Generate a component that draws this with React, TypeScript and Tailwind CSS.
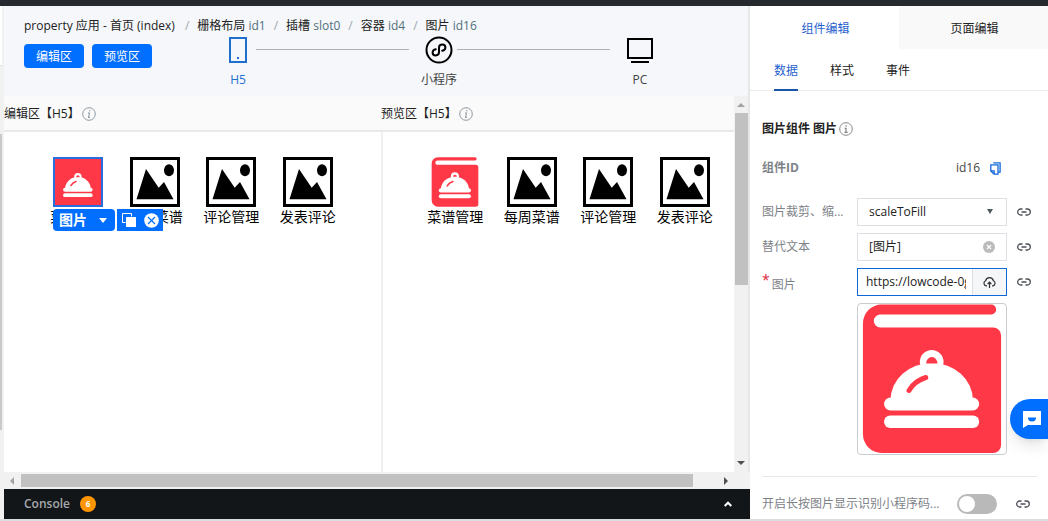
import { Fragment, useState } from "react";
import type { ReactNode } from "react";
import clsx from "clsx";

const CRUMBS = [
  { name: "栅格布局", id: "id1" },
  { name: "插槽", id: "slot0" },
  { name: "容器", id: "id4" },
  { name: "图片", id: "id16" },
];

const MENU = ["菜谱管理", "每周菜谱", "评论管理", "发表评论"];

function BookIcon({ className }: { className?: string }) {
  return (
    <svg viewBox="0 0 150 150" preserveAspectRatio="none" className={className} aria-hidden="true">
      <path
        fill="#ff3847"
        d="M24 .5H135a5 5 0 0 1 0 10H22.500a6.500 6.500 0 0 0 0 13H137a8 8 0 0 1 8 8V141a8 8 0 0 1-8 8H24a19 19 0 0 1-19-19V19.500a19 19 0 0 1 19-19z"
      />
      <circle cx="74.700" cy="58" r="12" fill="#fff" />
      <path fill="#fff" d="M33 96a41.700 37 0 0 1 83.400 0z" />
      <path fill="#ff3847" d="M69 59.500a5.800 6.500 0 0 1 11.600 0z" />
      <rect x="26.400" y="93.500" width="96.400" height="13" rx="6.500" fill="#fff" />
      <rect x="26.400" y="111.500" width="96.400" height="12.500" rx="6.200" fill="#fff" />
      <path d="M51.700 86.500q5.500-9.500 17-13" fill="none" stroke="#ff3847" strokeWidth="5" strokeLinecap="round" />
    </svg>
  );
}

function PictureIcon({ className }: { className?: string }) {
  return (
    <svg viewBox="0 0 50 50" className={className} aria-hidden="true">
      <rect x="1.500" y="1.500" width="47" height="47" fill="#fff" stroke="#000" strokeWidth="3" />
      <path d="M6.500 42.300 16 12l12.700 18.700L34 25l9.500 17.300z" />
      <ellipse cx="39" cy="13.300" rx="5" ry="6" />
    </svg>
  );
}

function PhoneIcon() {
  return (
    <svg width="18" height="26" viewBox="0 0 18 26" aria-hidden="true">
      <rect x="1" y="1" width="16" height="24" fill="none" stroke="#1f6fd0" strokeWidth="2" />
      <rect x="8" y="20" width="2" height="2" fill="#1f6fd0" />
    </svg>
  );
}

function MiniProgramIcon() {
  return (
    <svg width="28" height="28" viewBox="0 0 28 28" fill="none" stroke="#000" strokeWidth="2" aria-hidden="true">
      <circle cx="14" cy="14" r="12.500" />
      <path
        strokeLinecap="round"
        d="M17.200 14.800c2.100-.5 3.200-1.800 3.200-3.300 0-1.700-1.400-2.900-3.100-2.900-1.900 0-3.300 1.300-3.300 3.100v4.600c0 1.800-1.400 3.100-3.300 3.100-1.700 0-3.100-1.200-3.100-2.900 0-1.500 1.100-2.800 3.200-3.300"
      />
    </svg>
  );
}

function MonitorIcon() {
  return (
    <svg width="26" height="26" viewBox="0 0 26 26" aria-hidden="true">
      <rect x="1" y="2" width="24" height="19" fill="none" stroke="#000" strokeWidth="2" />
      <path d="M4 24h18v2H4z" />
    </svg>
  );
}

function InfoIcon({ className, italic }: { className: string; italic?: boolean }) {
  return (
    <svg viewBox="0 0 14 14" fill="none" stroke="currentColor" className={className} aria-hidden="true">
      <circle cx="7" cy="7" r="6.300" />
      {italic ? (
        <path d="M7.900 3.200l-.2 1.200M6 6h1.400l-.8 4.400h1.300" strokeWidth="1.100" />
      ) : (
        <path d="M7 3.200v1.500M5.700 6.300H7v4M5.400 10.300h3.300" strokeWidth="1.300" />
      )}
    </svg>
  );
}

function LinkIcon() {
  return (
    <svg width="14" height="8" viewBox="0 0 14 8" fill="none" stroke="#4b4f55" strokeWidth="1.300" aria-hidden="true">
      <path d="M5.500 7H3.700a3 3 0 0 1 0-6h1.800M8.500 1h1.800a3 3 0 0 1 0 6H8.500M4.500 4h5" />
    </svg>
  );
}

function BindButton({ label }: { label: string }) {
  return (
    <button type="button" aria-label={label} className="flex h-7 w-4 shrink-0 items-center justify-center">
      <LinkIcon />
    </button>
  );
}

function Step({ icon, label, active }: { icon: ReactNode; label: string; active?: boolean }) {
  return (
    <div className="flex w-9 shrink-0 flex-col items-center">
      <span className="flex h-7 items-center">{icon}</span>
      <span className={clsx("mt-1.5 whitespace-nowrap leading-5", active ? "text-[#1f6fd0]" : "text-[#444]")}>{label}</span>
    </div>
  );
}

function PaneTitle({ children }: { children: ReactNode }) {
  return (
    <h2 className="flex h-9 shrink-0 items-center gap-0.5 border-b-2 border-[#e9e9e9] bg-[#fafafa] pt-0.5 text-[#222]">
      {children}
      <InfoIcon italic className="h-3.5 w-3.5 text-[#8f9aa3]" />
    </h2>
  );
}

function MenuGrid({ selected }: { selected?: boolean }) {
  return (
    <div className="relative grid grid-cols-4 text-sm leading-5 text-black">
      {MENU.map((label, i) => (
        <div key={label} className="flex flex-col items-center">
          {i === 0 ? (
            <span className={clsx("h-[50px] w-[50px]", selected && "border-2 border-[#2a6de0] bg-[#ff3847]")}>
              <BookIcon className="h-full w-full" />
            </span>
          ) : (
            <PictureIcon className="h-[50px] w-[50px]" />
          )}
          <span className="whitespace-nowrap">{label}</span>
        </div>
      ))}
      {selected && (
        <div className="absolute left-[13px] top-[52px] flex h-[22px] gap-0.5 text-white">
          <button type="button" className="flex w-[62px] items-center justify-between rounded-sm bg-[#006eff] pl-1.5 pr-2 font-bold">
            图片
            <svg width="8" height="5" viewBox="0 0 8 5" fill="currentColor" aria-hidden="true">
              <path d="M0 0h8L4 5z" />
            </svg>
          </button>
          <div className="flex w-[46px] items-center justify-between bg-[#006eff] px-1">
            <button type="button" aria-label="复制">
              <svg width="16" height="16" viewBox="0 0 16 16" aria-hidden="true">
                <path d="M4.500 10.500h-3v-9h9v3" fill="none" stroke="#fff" />
                <rect x="5" y="5" width="10" height="10" fill="#fff" />
              </svg>
            </button>
            <button type="button" aria-label="删除">
              <svg width="15" height="15" viewBox="0 0 15 15" aria-hidden="true">
                <circle cx="7.500" cy="7.500" r="7.300" fill="#fff" />
                <path d="M4 4l7 7M11 4l-7 7" stroke="#006eff" strokeWidth="1.200" />
              </svg>
            </button>
          </div>
        </div>
      )}
    </div>
  );
}

function VerticalScrollbar() {
  return (
    <div className="flex w-4 shrink-0 flex-col items-center border-r-2 border-[#e6e7e9] bg-[#f1f1f1]">
      <svg width="8" height="17" viewBox="0 0 8 17" aria-hidden="true">
        <path d="M0 11h8L4 7z" fill="#a3a3a3" />
      </svg>
      <div className="h-[172px] w-[13px] bg-[#c1c1c1]" />
      <div className="grow" />
      <svg width="8" height="17" viewBox="0 0 8 17" aria-hidden="true">
        <path d="M0 6h8l-4 4z" fill="#505050" />
      </svg>
    </div>
  );
}

function HorizontalScrollbar() {
  return (
    <div className="flex h-[17px] shrink-0 items-center bg-[#f1f1f1] pr-4">
      <svg width="17" height="8" viewBox="0 0 17 8" className="shrink-0" aria-hidden="true">
        <path d="M10 0v8L6 4z" fill="#a3a3a3" />
      </svg>
      <div className="h-[13px] w-[92%] bg-[#c1c1c1]" />
      <div className="grow" />
      <svg width="17" height="8" viewBox="0 0 17 8" className="shrink-0" aria-hidden="true">
        <path d="M7 0v8l4-4z" fill="#505050" />
      </svg>
    </div>
  );
}

function Workspace() {
  return (
    <main className="flex min-w-0 flex-1 flex-col">
      <header className="h-[90px] shrink-0 border-r-2 border-[#e6e7e9] bg-[#f5f7fa] pl-5 pt-2.5">
        <nav className="flex h-5 items-center whitespace-nowrap text-[#222]">
          <a href="#page">property 应用 - 首页 (index)</a>
          {CRUMBS.map((crumb, i) => (
            <Fragment key={crumb.id}>
              <span className={clsx("text-[#a0a6ad]", i === 0 ? "ml-2.5 mr-2" : "mx-2")}>/</span>
              <a href={`#${crumb.id}`}>
                {crumb.name} <span className="text-[#52707c]">{crumb.id}</span>
              </a>
            </Fragment>
          ))}
        </nav>
        <div className="flex items-start">
          <div className="mt-2 flex w-[196px] shrink-0 gap-2">
            <button type="button" className="h-6 w-[60px] rounded-sm bg-[#006eff] pt-0.5 text-white">
              编辑区
            </button>
            <button type="button" className="h-6 w-[60px] rounded-sm bg-[#006eff] pt-0.5 text-white">
              预览区
            </button>
          </div>
          <div className="flex flex-1 items-start pr-[90px]">
            <Step icon={<PhoneIcon />} label="H5" active />
            <span className="mr-3 mt-[13px] h-px flex-1 bg-[#b0b0b0]" />
            <Step icon={<MiniProgramIcon />} label="小程序" />
            <span className="mr-3 mt-[13px] h-px flex-1 bg-[#b0b0b0]" />
            <Step icon={<MonitorIcon />} label="PC" />
          </div>
        </div>
      </header>

      <div className="flex min-h-0 flex-1">
        <div className="grid flex-1 grid-cols-[377fr_353fr] bg-white">
          <section>
            <PaneTitle>编辑区【H5】</PaneTitle>
            <div className="pl-9 pr-[35px] pt-[25px]">
              <MenuGrid selected />
            </div>
          </section>
          <section className="flex flex-col">
            <PaneTitle>预览区【H5】</PaneTitle>
            <div className="flex-1 border-l-2 border-[#f0f0f0] pl-[34px] pr-[11px] pt-[25px]">
              <MenuGrid />
            </div>
          </section>
        </div>
        <VerticalScrollbar />
      </div>
      <HorizontalScrollbar />

      <footer className="flex h-[30px] shrink-0 items-center bg-[#131619] pl-5 pr-4">
        <span className="font-semibold text-[#a5a9ad]">Console</span>
        <span className="ml-2.5 flex h-4 w-4 items-center justify-center rounded-full bg-[#ff9500] text-[8px] font-bold text-white">
          6
        </span>
        <button type="button" aria-label="展开控制台" className="ml-auto flex h-5 w-3 items-center justify-center">
          <svg width="8" height="6" viewBox="0 0 8 6" fill="none" stroke="#fff" strokeWidth="2" aria-hidden="true">
            <path d="M.7 5 4 1.700 7.300 5" />
          </svg>
        </button>
      </footer>
    </main>
  );
}

function Inspector() {
  const [mode, setMode] = useState("scaleToFill");
  const [alt, setAlt] = useState("[图片]");
  const [url, setUrl] = useState("https://lowcode-0gx1.tcloudbaseapp.com/menu.png");
  const [longPress, setLongPress] = useState(false);

  return (
    <aside className="flex w-[298px] shrink-0 flex-col bg-white">
      <div className="grid h-[43px] shrink-0 grid-cols-2 text-[#222]">
        <button type="button" className="pl-0.5 pt-0.5 text-[#1f5fcc]">
          组件编辑
        </button>
        <button type="button" className="bg-[#f9f9f9] pl-0.5 pt-0.5">
          页面编辑
        </button>
      </div>
      <div className="flex h-[42px] shrink-0 gap-8 border-b border-[#ececec] px-6 text-[#222]">
        <button type="button" className="-mb-px border-b-2 border-[#1a56a8] pt-1 text-[#1f5fcc]">
          数据
        </button>
        <button type="button" className="pt-0.5">
          样式
        </button>
        <button type="button" className="pt-0.5">
          事件
        </button>
      </div>

      <div className="pl-3 pr-[11px] pt-7 text-[#7d8288]">
        <h3 className="flex h-5 items-center gap-0.5 font-bold text-[#222]">
          图片组件 图片
          <InfoIcon className="h-3.5 w-3.5 text-[#888]" />
        </h3>
        <div className="mt-[19px] flex h-5 items-center pr-9">
          <span className="font-bold">组件ID</span>
          <span className="ml-auto text-[#444]">id16</span>
          <button type="button" aria-label="复制ID" className="ml-2.5">
            <svg width="11" height="13" viewBox="0 0 11 13" fill="none" stroke="#1068d8" strokeWidth="1.300" aria-hidden="true">
              <path d="M3.200.8h6.900v9.400H8M.8 2.800H8v9.300H4L.8 9zM.8 8.900h3.300v3.200" />
            </svg>
          </button>
        </div>

        <div className="mt-5 flex items-center">
          <label htmlFor="mode" className="w-[95px] shrink-0">
            图片裁剪、缩...
          </label>
          <div className="relative w-[150px] shrink-0">
            <select
              id="mode"
              value={mode}
              onChange={(e) => setMode(e.target.value)}
              className="h-7 w-full appearance-none border border-[#dcdfe3] bg-white px-[11px] text-[#222] outline-none"
            >
              <option>scaleToFill</option>
              <option>aspectFit</option>
              <option>aspectFill</option>
            </select>
            <svg width="6" height="5" viewBox="0 0 6 5" fill="#4d5a5e" className="pointer-events-none absolute right-[14px] top-[11px]" aria-hidden="true">
              <path d="M0 0h6L3 5z" />
            </svg>
          </div>
          <span className="ml-[9px]">
            <BindButton label="绑定裁剪" />
          </span>
        </div>

        <div className="mt-[7px] flex items-center">
          <label htmlFor="alt" className="w-[95px] shrink-0">
            替代文本
          </label>
          <div className="flex h-7 w-[150px] shrink-0 items-center border border-[#dcdfe3] pl-[11px] pr-[11px]">
            <input id="alt" value={alt} onChange={(e) => setAlt(e.target.value)} className="w-0 flex-1 text-[#222] outline-none" />
            <button type="button" aria-label="清空" onClick={() => setAlt("")}>
              <svg width="12" height="12" viewBox="0 0 12 12" aria-hidden="true">
                <circle cx="6" cy="6" r="6" fill="#bbb" />
                <path d="M4 4l4 4M8 4l-4 4" stroke="#fff" strokeWidth="1.200" />
              </svg>
            </button>
          </div>
          <span className="ml-[9px]">
            <BindButton label="绑定替代文本" />
          </span>
        </div>

        <div className="mt-[7px] flex items-center">
          <label htmlFor="src" className="flex w-[95px] shrink-0 items-center gap-0.5">
            <span className="pb-1 text-sm leading-5 text-[#e0283c]">*</span>
            <span className="pt-1.5">图片</span>
          </label>
          <div className="flex h-7 w-[150px] shrink-0 items-stretch border border-[#1068d8] pl-2">
            <input id="src" value={url} onChange={(e) => setUrl(e.target.value)} className="mr-1.5 w-0 flex-1 text-[#222] outline-none" />
            <button type="button" aria-label="上传" className="flex w-[34px] items-center justify-center border-l border-[#dcdfe3] bg-[#f5f6f7]">
              <svg width="13" height="11" viewBox="0 0 13 11" fill="none" stroke="#333" strokeWidth="1.200" aria-hidden="true">
                <path d="M4 8.800H3.300A2.600 2.600 0 0 1 2.600 3.800a4 4 0 0 1 7.800 0 2.600 2.600 0 0 1-.7 5H9M6.500 11V5.200M4.600 7l1.900-1.900L8.400 7" />
              </svg>
            </button>
          </div>
          <span className="ml-[9px]">
            <BindButton label="绑定图片" />
          </span>
        </div>

        <div className="ml-[95px] mt-[7px] h-[152px] w-[150px] rounded-sm border border-[#c9ccd0]">
          <BookIcon className="h-full w-full" />
        </div>

        <hr className="mt-[21px] border-[#e6e8ea]" />
        <div className="mt-[13px] flex h-7 items-center">
          <label htmlFor="longPress" className="min-w-0 flex-1 whitespace-nowrap">
            开启长按图片显示识别小程序码...
          </label>
          <input
            id="longPress"
            type="checkbox"
            role="switch"
            checked={longPress}
            onChange={(e) => setLongPress(e.target.checked)}
            className="flex h-5 w-10 appearance-none items-center rounded-full bg-[#b9b9b9] px-0.5 before:h-4 before:w-4 before:rounded-full before:bg-white checked:justify-end checked:bg-[#006eff]"
          />
          <span className="ml-[18px] mr-1.5">
            <BindButton label="绑定长按识别" />
          </span>
        </div>
      </div>
    </aside>
  );
}

export default function App() {
  return (
    <div className="relative flex h-screen flex-col overflow-hidden bg-[#f5f7fa] font-['Open_Sans','Noto_Sans_CJK_SC',sans-serif] text-xs">
      <div className="h-1.5 shrink-0 bg-[#262a2f]" />
      <div className="flex min-h-0 flex-1">
        <div className="flex w-1 shrink-0 flex-col bg-[#f1f1f1] pr-0.5">
          <div className="h-[60px] border-b border-[#e2e2e2] bg-white" />
          <div className="mt-[68px] h-[296px] bg-[#c9c9c9]" />
        </div>
        <Workspace />
        <Inspector />
      </div>
      <div className="h-0.5 shrink-0 bg-[#dcdcdc]" />
      <button
        type="button"
        aria-label="在线咨询"
        className="absolute right-0 top-[399px] flex h-10 w-[38px] items-center justify-center rounded-l-full bg-[#006eff] pl-1.5 shadow-lg"
      >
        <svg width="18" height="17" viewBox="0 0 18 17" aria-hidden="true">
          <path d="M0 0h18v14H5l-5 3z" fill="#fff" />
          <path d="M5 6.500h8a4 4 0 0 1-8 0z" fill="#006eff" />
        </svg>
      </button>
    </div>
  );
}
